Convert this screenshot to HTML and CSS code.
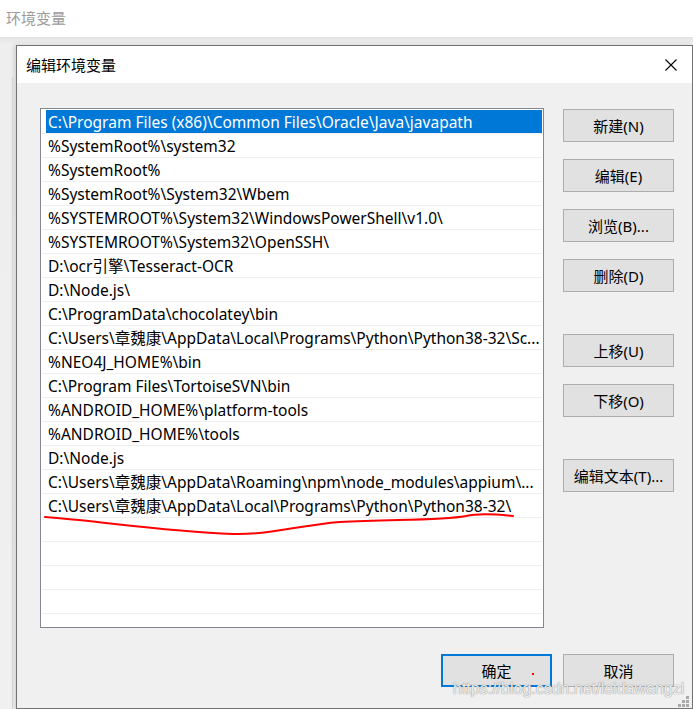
FILE: index.html
```html
<!DOCTYPE html>
<html lang="zh-CN">
<head>
<meta charset="utf-8">
<title>编辑环境变量</title>
<link rel="stylesheet" href="styles.css">
</head>
<body>
<div class="app-title">环境变量</div>
<div class="backdrop">
  <div class="dialog">
    <div class="titlebar">
      <span class="title">编辑环境变量</span>
      <span class="close">
        <svg width="12" height="12" viewBox="0 0 12 12"><path d="M0.5 0.5 L11.5 11.5 M11.5 0.5 L0.5 11.5" stroke="#000" stroke-width="1.1" fill="none"/></svg>
      </span>
    </div>
    <div class="dlg-body">
      <div class="main">
        <ul class="list">
          <li class="row selected">C:\Program Files (x86)\Common Files\Oracle\Java\javapath</li>
          <li class="row">%SystemRoot%\system32</li>
          <li class="row">%SystemRoot%</li>
          <li class="row">%SystemRoot%\System32\Wbem</li>
          <li class="row">%SYSTEMROOT%\System32\WindowsPowerShell\v1.0\</li>
          <li class="row">%SYSTEMROOT%\System32\OpenSSH\</li>
          <li class="row">D:\ocr引擎\Tesseract-OCR</li>
          <li class="row">D:\Node.js\</li>
          <li class="row">C:\ProgramData\chocolatey\bin</li>
          <li class="row">C:\Users\章魏康\AppData\Local\Programs\Python\Python38-32\Sc...</li>
          <li class="row">%NEO4J_HOME%\bin</li>
          <li class="row">C:\Program Files\TortoiseSVN\bin</li>
          <li class="row">%ANDROID_HOME%\platform-tools</li>
          <li class="row">%ANDROID_HOME%\tools</li>
          <li class="row">D:\Node.js</li>
          <li class="row">C:\Users\章魏康\AppData\Roaming\npm\node_modules\appium\...</li>
          <li class="row">C:\Users\章魏康\AppData\Local\Programs\Python\Python38-32\</li>
          <li class="row"></li>
          <li class="row"></li>
          <li class="row"></li>
          <li class="row"></li>
          <li class="row"></li>
        </ul>
        <div class="side">
          <button class="btn">新建(N)</button>
          <button class="btn">编辑(E)</button>
          <button class="btn">浏览(B)...</button>
          <button class="btn">删除(D)</button>
          <button class="btn gap">上移(U)</button>
          <button class="btn">下移(O)</button>
          <button class="btn gap">编辑文本(T)...</button>
        </div>
      </div>
      <div class="footer">
        <button class="btn primary">确定</button>
        <button class="btn">取消</button>
      </div>
    </div>
  </div>
</div>

<svg class="scribble" width="693" height="709" viewBox="0 0 693 709">
  <path d="M45 517 C 100 521 160 531 233 534 C 270 535 300 525 340 522 C 390 519 440 521 466 516 C 478 513 495 514 513 516" stroke="#ff0000" stroke-width="2" fill="none" stroke-linecap="round"/>
</svg>
<span class="red-dot"></span>
<div class="watermark">https://blog.csdn.net/leidawangzi</div>
<svg class="grip" width="12" height="12" viewBox="0 0 12 12">
  <rect x="8" y="0" width="3" height="3" fill="#a9a9a9"/>
  <rect x="4" y="4" width="3" height="3" fill="#a9a9a9"/>
  <rect x="8" y="4" width="3" height="3" fill="#a9a9a9"/>
  <rect x="0" y="8" width="3" height="3" fill="#a9a9a9"/>
  <rect x="4" y="8" width="3" height="3" fill="#a9a9a9"/>
  <rect x="8" y="8" width="3" height="3" fill="#a9a9a9"/>
</svg>
</body>
</html>
```

FILE: styles.css
```css
html, body {
  margin: 0;
  padding: 0;
}
body {
  width: 693px;
  height: 709px;
  overflow: hidden;
  position: relative;
  background: #ffffff;
  font-family: "Noto Sans", "Noto Sans CJK SC", sans-serif;
  font-size: 15px;
  color: #000;
}
.app-title {
  height: 37px;
  line-height: 37px;
  padding-left: 6px;
  color: #9b9b9b;
  font-size: 15px;
}
.backdrop {
  position: relative;
  height: 672px;
  box-sizing: border-box;
  padding: 8px 0 0 16px;
  background: linear-gradient(#e3e3e3, #eeeeee 7px, #f0f0f0);
}
.backdrop::before {
  content: "";
  position: absolute;
  left: 12px;
  top: 40px;
  bottom: 0;
  width: 1px;
  background: #d9d9d9;
}
.dialog {
  position: relative;
  width: 677px;
  height: 664px;
  box-sizing: border-box;
  border: 1px solid #737373;
  background: #f0f0f0;
  box-shadow: -2px 0 4px rgba(0, 0, 0, 0.12);
  display: flex;
  flex-direction: column;
}
.titlebar {
  height: 37px;
  flex: none;
  background: #fff;
  display: flex;
  align-items: center;
  justify-content: space-between;
  padding: 0 6px 0 9px;
}
.title {
  font-size: 15px;
  color: #000;
}
.close {
  width: 30px;
  height: 30px;
  display: flex;
  align-items: center;
  justify-content: center;
}
.dlg-body {
  flex: 1;
  display: flex;
  flex-direction: column;
  padding: 25px 18px 0 23px;
}
.main {
  display: flex;
  gap: 19px;
}
.list {
  width: 504px;
  height: 520px;
  box-sizing: border-box;
  margin: 0;
  padding: 1px 1px 0 1px;
  list-style: none;
  border: 1px solid #828790;
  background: #fff;
  overflow: hidden;
}
.row {
  height: 24px;
  box-sizing: border-box;
  border-bottom: 1px solid #efefef;
  padding-left: 6px;
  line-height: 24px;
  white-space: nowrap;
  overflow: hidden;
  font-size: 15.5px;
  color: #000;
}
.row.selected {
  background: linear-gradient(to right, transparent 4px, #0078d7 4px);
  color: #fff;
}
.side {
  display: flex;
  flex-direction: column;
  gap: 17px;
  padding-top: 1px;
}
.btn {
  width: 111px;
  height: 33px;
  box-sizing: border-box;
  border: 1px solid #adadad;
  background: #e1e1e1;
  font-family: "Noto Sans", "Noto Sans CJK SC", sans-serif;
  font-size: 15px;
  color: #000;
  padding: 0;
  margin: 0;
}
.btn.gap {
  margin-top: 25px;
}
.footer {
  display: flex;
  justify-content: flex-end;
  gap: 11px;
  margin-top: 26px;
}
.btn.primary {
  border: 2px solid #0078d7;
}
.scribble {
  position: absolute;
  left: 0;
  top: 0;
  pointer-events: none;
}
.red-dot {
  position: absolute;
  left: 532px;
  top: 673px;
  width: 2px;
  height: 2px;
  background: #f00;
}
.watermark {
  position: absolute;
  left: 453px;
  top: 682px;
  font-family: "Liberation Sans", Arial, sans-serif;
  font-size: 16px;
  line-height: 14px;
  color: rgba(250, 250, 250, 0.9);
  text-shadow: 0 0 1px rgba(120, 120, 120, 0.8), 0 0 1px rgba(120, 120, 120, 0.6);
  white-space: nowrap;
}
.grip {
  position: absolute;
  left: 678px;
  top: 696px;
}
```
